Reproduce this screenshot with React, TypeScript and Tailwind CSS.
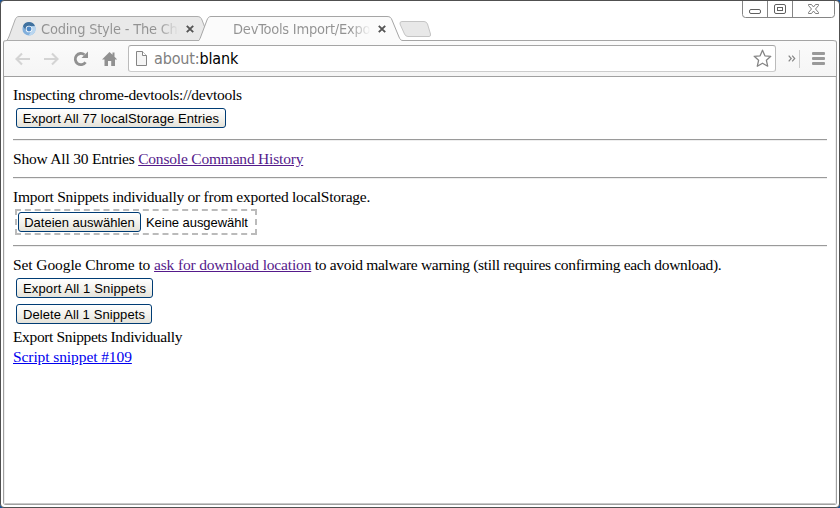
import type { ReactNode } from "react";

function Button({ children, className = "" }: { children: ReactNode; className?: string }) {
  return (
    <button
      className={`block h-[20px] whitespace-nowrap rounded-[3px] border border-[#003c74] bg-linear-to-b from-white via-[#f4f3ee] to-[#e4e2d9] pt-px text-center font-['Liberation_Sans',Arial,sans-serif] text-[13px] leading-[18px] text-black ${className}`}
    >
      {children}
    </button>
  );
}

function Rule({ className = "" }: { className?: string }) {
  return <hr className={`h-[2px] border-t border-b border-t-[#9a9a9a] border-b-[#eeeeee] ${className}`} />;
}

function CloseX({ className = "" }: { className?: string }) {
  return (
    <svg className={className} width="8" height="8" viewBox="0 0 8 8">
      <path d="M.8 .8l6.4 6.4M7.2 .8L.8 7.2" stroke="#555555" strokeWidth="1.9" />
    </svg>
  );
}

function TabTitle({ children, className = "" }: { children: ReactNode; className?: string }) {
  return (
    <span
      className={`relative w-[138px] whitespace-nowrap bg-linear-to-r from-[#929292] from-85% to-transparent bg-clip-text font-['DejaVu_Sans_Condensed','Noto_Sans',sans-serif] text-[14.5px] leading-[20px] tracking-[-0.22px] text-transparent ${className}`}
    >
      {children}
    </span>
  );
}

function TabStrip() {
  return (
    <div className="flex h-[39px] items-start">
      <div className="relative z-0 mt-[15px] ml-[6px] flex h-[25px] w-[200px] items-center">
        <svg className="absolute inset-0" width="202" height="25" viewBox="0 0 202 25">
          <path d="M0 24.5C1 23 1.5 21.5 2.2 20L8 4C9 1.5 10 .5 12 .5H190C193 .5 194 1.5 195 4L200 17L196 23L193 24.5Z" fill="#e9e9e9" stroke="#acacac" />
        </svg>
        <svg className="relative mt-px ml-[15px] shrink-0" width="14" height="14" viewBox="0 0 15 15">
          <circle cx="7.5" cy="7.5" r="7" fill="#81afdc" />
          <path d="M1 4.5A7 7 0 0 1 14 4.5H7.5A3.4 3.4 0 0 0 4.4 9z" fill="#41729f" />
          <path d="M14 4.5A7 7 0 0 1 7 14.5L10.5 9V4.5z" fill="#b9d6f0" />
          <circle cx="7.5" cy="7.5" r="3.6" fill="#eff6fc" />
          <circle cx="7.5" cy="7.5" r="2.6" fill="#4d87c4" />
        </svg>
        <TabTitle className="ml-[5px]">Coding Style - The Chr</TabTitle>
        <CloseX className="relative ml-[7px]" />
      </div>
      <div className="relative z-10 mt-[15px] -ml-[8px] flex h-[25px] w-[204px] items-center">
        <svg className="absolute inset-0" width="204" height="25" viewBox="0 0 204 25">
          <path d="M0 25L2 20L8 4C9 1.5 10 .5 12 .5H188C191 .5 192 1.5 193 4L200 21C201 23.5 202 24.5 204 24.5V25Z" fill="#fbfbfb" />
          <path d="M0 24C1 23 1.5 21.5 2 20L8 4C9 1.5 10 .5 12 .5H188C191 .5 192 1.5 193 4L200 21C201 23.5 202 24.5 204 24.5" fill="none" stroke="#a5a5a5" />
        </svg>
        <TabTitle className="ml-[34px]">DevTools Import/Expo</TabTitle>
        <CloseX className="relative ml-[7px]" />
      </div>
      <svg className="mt-[20px] -ml-[4px]" width="33" height="17" viewBox="0 0 33 17">
        <path d="M3 .5H25Q27.5 .5 28.5 3L31.5 13Q32 15.5 30 15.5H9Q6.5 15.5 5.5 13L1 3Q.5 .5 3 .5Z" fill="#e8e8e8" stroke="#c4c4c4" />
      </svg>
      <svg className="-mt-px mr-[4px] ml-auto" width="93" height="18" viewBox="0 0 93 18" fill="none">
        <path d="M.5 0V14.5Q.5 17.5 3.5 17.5H89.5Q92.5 17.5 92.5 14.5V0M25.5 1V17M50.5 1V17" stroke="#858585" />
        <rect x="7.5" y="9.5" width="11" height="4" rx="1.5" stroke="#606060" />
        <rect x="32.5" y="4.5" width="11" height="9" rx="1.5" stroke="#606060" />
        <rect x="35.5" y="7.5" width="5" height="3" stroke="#606060" />
        <path d="M66.5 4.5h3l2 2.5 2-2.5h3v1L73.5 9l3 3.5v1h-3l-2-2.5-2 2.5h-3v-1l3-3.5-3-3.5z" stroke="#707070" strokeWidth=".9" />
      </svg>
    </div>
  );
}

function Toolbar() {
  return (
    <div className="flex h-[37px] shrink-0 items-center rounded-t-[3px] border-t border-b border-t-[#a5a5a5] border-b-[#a0a0a0] bg-linear-to-b from-[#fbfbfb] to-[#f5f5f5]">
      <svg className="ml-[10px] shrink-0" width="104" height="18" viewBox="0 0 104 18" fill="none">
        <path d="M16 9H2.5M8 3.5L2.5 9L8 14.5" stroke="#d4d4d4" strokeWidth="2.1" />
        <path d="M30 9H43.5M38 3.5L43.5 9L38 14.5" stroke="#d4d4d4" strokeWidth="2.1" />
        <path d="M71.5 12.2A5.6 5.6 0 1 1 70.5 4.8" stroke="#919191" strokeWidth="2.8" />
        <path d="M74 1.5V8H67.5z" fill="#919191" />
        <path d="M95.5 2L88 9.5H90.5V16H94V11H97.2V16H101V9.5H103.2L100.5 6.8V2.5H98.5V4.8z" fill="#919191" />
      </svg>
      <div className="ml-[10px] flex h-[27px] w-[648px] items-center rounded-[3px] border border-t-[#a5a5a5] border-r-[#bbbbbb] border-b-[#cccccc] border-l-[#bbbbbb] bg-white">
        <svg className="ml-[6px]" width="13" height="16" viewBox="0 0 13 16">
          <path d="M1.5 .5H7.5L11.5 4.5V14.5H1.5Z" fill="#f5f5f5" stroke="#858585" />
          <path d="M7.5 .5V4.5H11.5" fill="#fff" stroke="#858585" />
        </svg>
        <span className="ml-[6px] font-['DejaVu_Sans_Condensed','Noto_Sans',sans-serif] text-[16px] leading-[22px] tracking-[-0.15px] text-black">
          <span className="text-[#808080]">about:</span>blank
        </span>
        <svg className="mr-[3px] ml-auto" width="19" height="19" viewBox="0 0 19 19">
          <path d="M9.5 1.2L11.9 6.8L17.8 7.3L13.4 11.3L14.7 17.2L9.5 14.2L4.3 17.2L5.6 11.3L1.2 7.3L7.1 6.8Z" fill="#fff" stroke="#858585" strokeWidth="1.3" strokeLinejoin="round" />
        </svg>
      </div>
      <svg className="ml-[12px]" width="8" height="7" viewBox="0 0 8 7">
        <path d="M.7 .7L3.2 3.5L.7 6.3M4.2 .7L6.7 3.5L4.2 6.3" fill="none" stroke="#858585" strokeWidth="1.2" />
      </svg>
      <div className="ml-[3px] h-[18px] w-px bg-[#cccccc]" />
      <div className="ml-[12px] flex flex-col gap-[2px]">
        <div className="h-[3px] w-[13px] rounded-[1px] bg-[#999999]" />
        <div className="h-[3px] w-[13px] rounded-[1px] bg-[#999999]" />
        <div className="h-[3px] w-[13px] rounded-[1px] bg-[#999999]" />
      </div>
    </div>
  );
}

function Page() {
  return (
    <main className="flex-1 overflow-hidden bg-white pt-[8px] pr-[8px] pl-[8px] font-['Liberation_Serif','Times_New_Roman',serif] text-[15.5px] leading-[19px] whitespace-nowrap text-black">
      <p className="tracking-[-0.25px]">Inspecting chrome-devtools://devtools</p>
      <Button className="mt-[4px] ml-[3px] w-[210px] tracking-[0.1px]">Export All 77 localStorage Entries</Button>
      <Rule className="mt-[11px]" />
      <p className="mt-[8px] tracking-[-0.2px]">
        Show All 30 Entries <a className="text-[#551a8b] underline">Console Command History</a>
      </p>
      <Rule className="mt-[9px]" />
      <p className="mt-[8px] tracking-[-0.26px]">Import Snippets individually or from exported localStorage.</p>
      <div className="mt-[3px] ml-[2px] flex h-[26px] w-[242px] items-center border-2 border-dashed border-[#bbbbbb]">
        <Button className="ml-px w-[123px]">Dateien auswählen</Button>
        <span className="mt-px ml-[5px] font-['Liberation_Sans',Arial,sans-serif] text-[13px] tracking-[-0.05px]">Keine ausgewählt</span>
      </div>
      <Rule className="mt-[10px]" />
      <p className="mt-[8px] tracking-[-0.31px]">
        <span className="tracking-[-0.09px]">Set Google Chrome to </span>
        <a className="tracking-[-0.17px] text-[#551a8b] underline">ask for download location</a> to avoid malware warning (still requires
        confirming each download).
      </p>
      <Button className="mt-[4px] ml-[3px] w-[137px] tracking-[0.15px]">Export All 1 Snippets</Button>
      <Button className="mt-[6px] ml-[3px] w-[136px] tracking-[0.1px]">Delete All 1 Snippets</Button>
      <p className="mt-[3px] tracking-[-0.36px]">Export Snippets Individually</p>
      <p className="mt-px tracking-[-0.09px]">
        <a className="text-[#0000ee] underline">Script snippet #109</a>
      </p>
    </main>
  );
}

export default function App() {
  return (
    <div className="h-[508px] w-[840px] bg-[#17549c]">
      <div className="flex h-full w-full flex-col overflow-hidden rounded-[4px] border border-[#505050] bg-white">
        <TabStrip />
        <div className="mx-[2px] mb-[2px] flex flex-1 flex-col rounded-[3px] border-x border-b border-[#a0a0a0]">
          <Toolbar />
          <div className="flex flex-1 flex-col border-x border-b border-x-[#eeeeee] border-b-[#c8c8c8]">
            <Page />
          </div>
        </div>
      </div>
    </div>
  );
}
